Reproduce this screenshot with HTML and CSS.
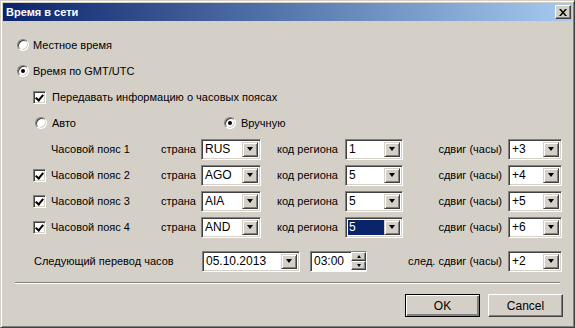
FILE: index.html
```html
<!DOCTYPE html>
<html lang="ru">
  <head>
    <meta charset="UTF-8">
    <title>Время в сети</title>
    <link rel="stylesheet" href="styles.css">
  </head>

  <body>
    <div class="window">
      <div class="titlebar">
        <span class="title">Время в сети</span>
        <span class="close-btn">
          <svg width="8" height="7" viewBox="0 0 8 7">
            <path d="M0 0h2l2 2.5 2-2.5h2l-3 3.5 3 3.5h-2l-2-2.5-2 2.5h-2l3-3.5z" fill="#000"/>
          </svg>
        </span>
      </div>

      <div class="client">
        <div class="row pad-radio">
          <span class="radio"></span>
          <span class="radio-text">Местное время</span>
        </div>
        <div class="row pad-radio">
          <span class="radio checked"></span>
          <span class="radio-text">Время по GMT/UTC</span>
        </div>
        <div class="row pad-check">
          <span class="check checked"></span>
          <span class="check-text">Передавать информацию о часовых поясах</span>
        </div>
        <div class="row pad-mode">
          <span class="mode-item">
            <span class="radio"></span>
            <span class="mode-text">Авто</span>
          </span>
          <span class="radio checked"></span>
          <span class="mode-text">Вручную</span>
        </div>

        <div class="row pad-check">
          <span class="zone-check"></span>
          <span class="zone-label">Часовой пояс 1</span>
          <span class="country-label">страна</span>
          <span class="combo w-country"><span class="value">RUS</span><span class="arrow"></span></span>
          <span class="region-label">код региона</span>
          <span class="combo w-region"><span class="value">1</span><span class="arrow"></span></span>
          <span class="shift-label">сдвиг (часы)</span>
          <span class="combo w-shift"><span class="value">+3</span><span class="arrow"></span></span>
        </div>
        <div class="row pad-check">
          <span class="zone-check"><span class="check checked"></span></span>
          <span class="zone-label">Часовой пояс 2</span>
          <span class="country-label">страна</span>
          <span class="combo w-country"><span class="value">AGO</span><span class="arrow"></span></span>
          <span class="region-label">код региона</span>
          <span class="combo w-region"><span class="value">5</span><span class="arrow"></span></span>
          <span class="shift-label">сдвиг (часы)</span>
          <span class="combo w-shift"><span class="value">+4</span><span class="arrow"></span></span>
        </div>
        <div class="row pad-check">
          <span class="zone-check"><span class="check checked"></span></span>
          <span class="zone-label">Часовой пояс 3</span>
          <span class="country-label">страна</span>
          <span class="combo w-country"><span class="value">AIA</span><span class="arrow"></span></span>
          <span class="region-label">код региона</span>
          <span class="combo w-region"><span class="value">5</span><span class="arrow"></span></span>
          <span class="shift-label">сдвиг (часы)</span>
          <span class="combo w-shift"><span class="value">+5</span><span class="arrow"></span></span>
        </div>
        <div class="row pad-check">
          <span class="zone-check"><span class="check checked"></span></span>
          <span class="zone-label">Часовой пояс 4</span>
          <span class="country-label">страна</span>
          <span class="combo w-country"><span class="value">AND</span><span class="arrow"></span></span>
          <span class="region-label">код региона</span>
          <span class="combo w-region"><span class="value selected">5</span><span class="arrow"></span></span>
          <span class="shift-label">сдвиг (часы)</span>
          <span class="combo w-shift"><span class="value">+6</span><span class="arrow"></span></span>
        </div>

        <div class="row next-row">
          <span class="next-label">Следующий перевод часов</span>
          <span class="combo w-date"><span class="value">05.10.2013</span><span class="arrow"></span></span>
          <span class="spin">
            <span class="value">03:00</span>
            <span class="spin-btns">
              <span class="spin-up"></span>
              <span class="spin-down"></span>
            </span>
          </span>
          <span class="next-shift-label">след. сдвиг (часы)</span>
          <span class="combo w-shift"><span class="value">+2</span><span class="arrow"></span></span>
        </div>

        <div class="separator"></div>

        <div class="buttons">
          <span class="btn default">OK</span>
          <span class="btn">Cancel</span>
        </div>
      </div>
    </div>
  </body>
</html>
```

FILE: styles.css
```css
body {
  margin: 0;
  background: #d4d0c8;
  font-family: 'Liberation Sans', Arial, sans-serif;
  font-size: 11px;
  color: #000;
}

.window {
  width: 575px;
  height: 328px;
  box-sizing: border-box;
  padding: 2px;
  background: #d4d0c8;
  border: 1px solid;
  border-color: #d4d0c8 #404040 #404040 #d4d0c8;
  box-shadow: inset 1px 1px #fff, inset -1px -1px #808080;
}

/* title bar */
.titlebar {
  height: 18px;
  display: flex;
  align-items: center;
  justify-content: space-between;
  padding: 0 1px 0 3px;
  background: linear-gradient(to right, #0a246a, #a6caf0);
}
.title {
  color: #fff;
  font-weight: bold;
  font-size: 11px;
}
.close-btn {
  width: 16px;
  height: 14px;
  box-sizing: border-box;
  display: flex;
  align-items: center;
  justify-content: center;
  background: #d4d0c8;
  border: 1px solid;
  border-color: #fff #404040 #404040 #fff;
  box-shadow: inset -1px -1px #808080;
}

.client {
  padding-top: 11px;
}

.row {
  display: flex;
  align-items: center;
  height: 26px;
  white-space: nowrap;
}
.pad-radio { padding-left: 14px; }
.pad-check { padding-left: 30px; }
.pad-mode { padding-left: 32px; }

/* radio buttons & checkboxes */
.radio {
  width: 12px;
  height: 12px;
  box-sizing: border-box;
  flex: none;
  border-radius: 50%;
  background: #fff;
  border: 1px solid;
  border-color: #808080 #fff #fff #808080;
  box-shadow: inset 1px 1px #404040, inset -1px -1px #d4d0c8;
  display: flex;
  align-items: center;
  justify-content: center;
}
.radio.checked::after {
  content: '';
  width: 4px;
  height: 4px;
  border-radius: 50%;
  background: #000;
}
.radio-text { margin-left: 4px; }

.check {
  width: 13px;
  height: 13px;
  box-sizing: border-box;
  flex: none;
  background: #fff;
  border: 1px solid;
  border-color: #808080 #fff #fff #808080;
  box-shadow: inset 1px 1px #404040, inset -1px -1px #d4d0c8;
  position: relative;
}
.check.checked::after {
  content: '';
  position: absolute;
  left: 3px;
  top: 1px;
  width: 3px;
  height: 6px;
  border: solid #000;
  border-width: 0 2px 2px 0;
  transform: rotate(40deg);
}
.check-text { margin-left: 6px; }

.mode-item {
  width: 189px;
  display: flex;
  align-items: center;
}
.mode-text { margin-left: 5px; }

/* time zone rows */
.zone-check {
  width: 18px;
  display: flex;
  align-items: center;
}
.zone-label { width: 110px; }
.country-label { width: 40px; }
.region-label {
  width: 68px;
  margin-left: 16px;
}
.shift-label {
  width: 99px;
  padding-right: 6px;
  text-align: right;
}

/* combo boxes */
.combo {
  height: 21px;
  box-sizing: border-box;
  display: flex;
  padding: 2px;
  background: #fff;
  border: 1px solid;
  border-color: #808080 #fff #fff #808080;
  box-shadow: inset 1px 1px #404040, inset -1px -1px #d4d0c8;
}
.combo .value {
  flex: 1;
  display: flex;
  align-items: center;
  padding-left: 1px;
  font-size: 12px;
}
.combo .value.selected {
  background: #0a246a;
  color: #fff;
}
.arrow {
  width: 16px;
  flex: none;
  box-sizing: border-box;
  background: #d4d0c8;
  border: 1px solid;
  border-color: #d4d0c8 #404040 #404040 #d4d0c8;
  box-shadow: inset 1px 1px #fff, inset -1px -1px #808080;
  display: flex;
  align-items: center;
  justify-content: center;
}
.arrow::after {
  content: '';
  border-left: 3.5px solid transparent;
  border-right: 3.5px solid transparent;
  border-top: 4px solid #000;
}
.w-country { width: 60px; }
.w-region { width: 58px; }
.w-shift { width: 54px; }
.w-date { width: 98px; }

/* next change row */
.next-row {
  margin-top: 8px;
  padding-left: 31px;
}
.next-label { width: 168px; }

.spin {
  width: 57px;
  height: 21px;
  box-sizing: border-box;
  margin-left: 10px;
  display: flex;
  padding: 2px 0 2px 2px;
  background: #fff;
  border: 1px solid;
  border-color: #808080 #fff #fff #808080;
  box-shadow: inset 1px 1px #404040;
}
.spin .value {
  flex: 1;
  display: flex;
  align-items: center;
  padding-left: 1px;
  font-size: 12px;
}
.spin-btns {
  width: 15px;
  display: flex;
  flex-direction: column;
  margin: -2px 0 -1px;
}
.spin-up, .spin-down {
  flex: 1;
  box-sizing: border-box;
  background: #d4d0c8;
  border: 1px solid;
  border-color: #fff #404040 #404040 #fff;
  box-shadow: inset -1px -1px #808080;
  display: flex;
  align-items: center;
  justify-content: center;
}
.spin-up::after {
  content: '';
  border-left: 2.5px solid transparent;
  border-right: 2.5px solid transparent;
  border-bottom: 3px solid #000;
}
.spin-down::after {
  content: '';
  border-left: 2.5px solid transparent;
  border-right: 2.5px solid transparent;
  border-top: 3px solid #000;
}
.next-shift-label {
  width: 135px;
  padding-right: 6px;
  text-align: right;
}

/* footer */
.separator {
  margin: 8px 0 0 12px;
  width: 545px;
  height: 1px;
  border-top: 1px solid #808080;
  border-bottom: 1px solid #fff;
  height: 0;
}

.buttons {
  display: flex;
  justify-content: flex-end;
  gap: 8px;
  margin-top: 10px;
  padding-right: 9px;
}
.btn {
  width: 75px;
  height: 23px;
  box-sizing: border-box;
  display: flex;
  align-items: center;
  justify-content: center;
  font-size: 12px;
  background: #d4d0c8;
  border: 1px solid;
  border-color: #fff #404040 #404040 #fff;
  box-shadow: inset -1px -1px #808080;
}
.btn.default {
  border-color: #000;
  box-shadow: inset 1px 1px #fff, inset -2px -2px #808080;
}
```
